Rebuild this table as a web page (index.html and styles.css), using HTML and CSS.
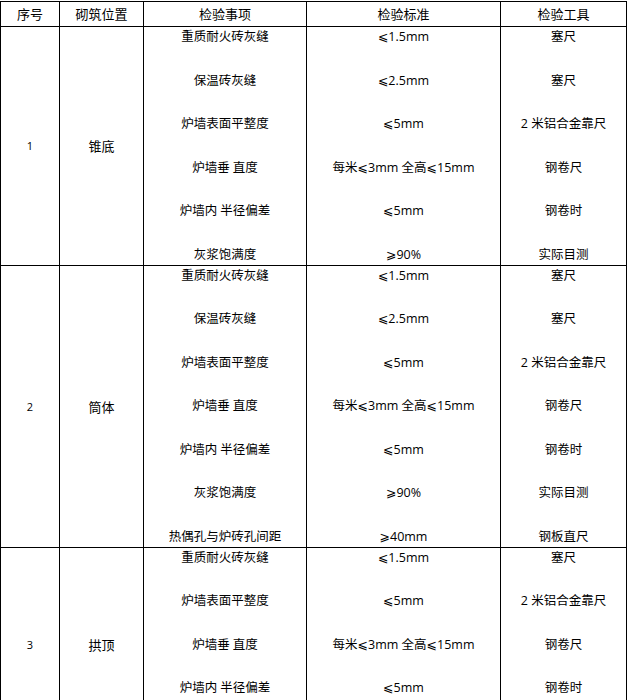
FILE: index.html
```html
<!DOCTYPE html>
<html lang="zh">
<head>
<meta charset="utf-8">
<title>砌筑检验</title>
<link rel="stylesheet" href="styles.css">
</head>
<body>
<table class="grid">
  <colgroup>
    <col class="c1"><col class="c2"><col class="c3"><col class="c4"><col class="c5">
  </colgroup>
  <thead>
    <tr class="head">
      <th>序号</th><th>砌筑位置</th><th>检验事项</th><th>检验标准</th><th>检验工具</th>
    </tr>
  </thead>
  <tbody>
    <tr>
      <td class="num">1</td>
      <td class="pos">锥底</td>
      <td class="list">
        <div class="item">重质耐火砖灰缝</div>
        <div class="item">保温砖灰缝</div>
        <div class="item">炉墙表面平整度</div>
        <div class="item">炉墙垂&#8197;直度</div>
        <div class="item">炉墙内&#8197;半径偏差</div>
        <div class="item">灰浆饱满度</div>
      </td>
      <td class="list">
        <div class="item">⩽1.5mm</div>
        <div class="item">⩽2.5mm</div>
        <div class="item">⩽5mm</div>
        <div class="item">每米⩽3mm 全高⩽15mm</div>
        <div class="item">⩽5mm</div>
        <div class="item">⩾90%</div>
      </td>
      <td class="list">
        <div class="item">塞尺</div>
        <div class="item">塞尺</div>
        <div class="item">2 米铝合金靠尺</div>
        <div class="item">钢卷尺</div>
        <div class="item">钢卷时</div>
        <div class="item">实际目测</div>
      </td>
    </tr>
    <tr>
      <td class="num">2</td>
      <td class="pos">筒体</td>
      <td class="list">
        <div class="item">重质耐火砖灰缝</div>
        <div class="item">保温砖灰缝</div>
        <div class="item">炉墙表面平整度</div>
        <div class="item">炉墙垂&#8197;直度</div>
        <div class="item">炉墙内&#8197;半径偏差</div>
        <div class="item">灰浆饱满度</div>
        <div class="item">热偶孔与炉砖孔间距</div>
      </td>
      <td class="list">
        <div class="item">⩽1.5mm</div>
        <div class="item">⩽2.5mm</div>
        <div class="item">⩽5mm</div>
        <div class="item">每米⩽3mm 全高⩽15mm</div>
        <div class="item">⩽5mm</div>
        <div class="item">⩾90%</div>
        <div class="item">⩾40mm</div>
      </td>
      <td class="list">
        <div class="item">塞尺</div>
        <div class="item">塞尺</div>
        <div class="item">2 米铝合金靠尺</div>
        <div class="item">钢卷尺</div>
        <div class="item">钢卷时</div>
        <div class="item">实际目测</div>
        <div class="item">钢板直尺</div>
      </td>
    </tr>
    <tr>
      <td class="num">3</td>
      <td class="pos">拱顶</td>
      <td class="list">
        <div class="item">重质耐火砖灰缝</div>
        <div class="item">炉墙表面平整度</div>
        <div class="item">炉墙垂&#8197;直度</div>
        <div class="item">炉墙内&#8197;半径偏差</div>
        <div class="item">灰浆饱满度</div>
      </td>
      <td class="list">
        <div class="item">⩽1.5mm</div>
        <div class="item">⩽5mm</div>
        <div class="item">每米⩽3mm 全高⩽15mm</div>
        <div class="item">⩽5mm</div>
        <div class="item">⩾90%</div>
      </td>
      <td class="list">
        <div class="item">塞尺</div>
        <div class="item">2 米铝合金靠尺</div>
        <div class="item">钢卷尺</div>
        <div class="item">钢卷时</div>
        <div class="item">实际目测</div>
      </td>
    </tr>
  </tbody>
</table>
</body>
</html>
```

FILE: styles.css
```css
html, body {
  margin: 0;
  padding: 0;
  background: #ffffff;
}
body {
  padding-top: 1px;
  font-family: "Open Sans", "Noto Sans CJK SC", "DejaVu Sans", sans-serif;
  font-size: 12.5px;
  color: #000;
}
.grid {
  border-collapse: collapse;
  table-layout: fixed;
  width: 626px;
}
.c1 { width: 59px; }
.c2 { width: 84px; }
.c3 { width: 163px; }
.c4 { width: 194px; }
.c5 { width: 126px; }
.grid th, .grid td {
  border: 1px solid #000;
  padding: 0;
  text-align: center;
  font-weight: normal;
}
.head th {
  height: 24px;
  line-height: 24px;
  font-size: 13px;
}
.num {
  vertical-align: middle;
  font-size: 11px;
}
.pos {
  vertical-align: middle;
  font-size: 13px;
}
.list {
  vertical-align: top;
  padding: 1px 0 4px 0;
}
.item {
  height: 20px;
  line-height: 20px;
  white-space: nowrap;
}
.item + .item {
  margin-top: 23.5px;
}
```
